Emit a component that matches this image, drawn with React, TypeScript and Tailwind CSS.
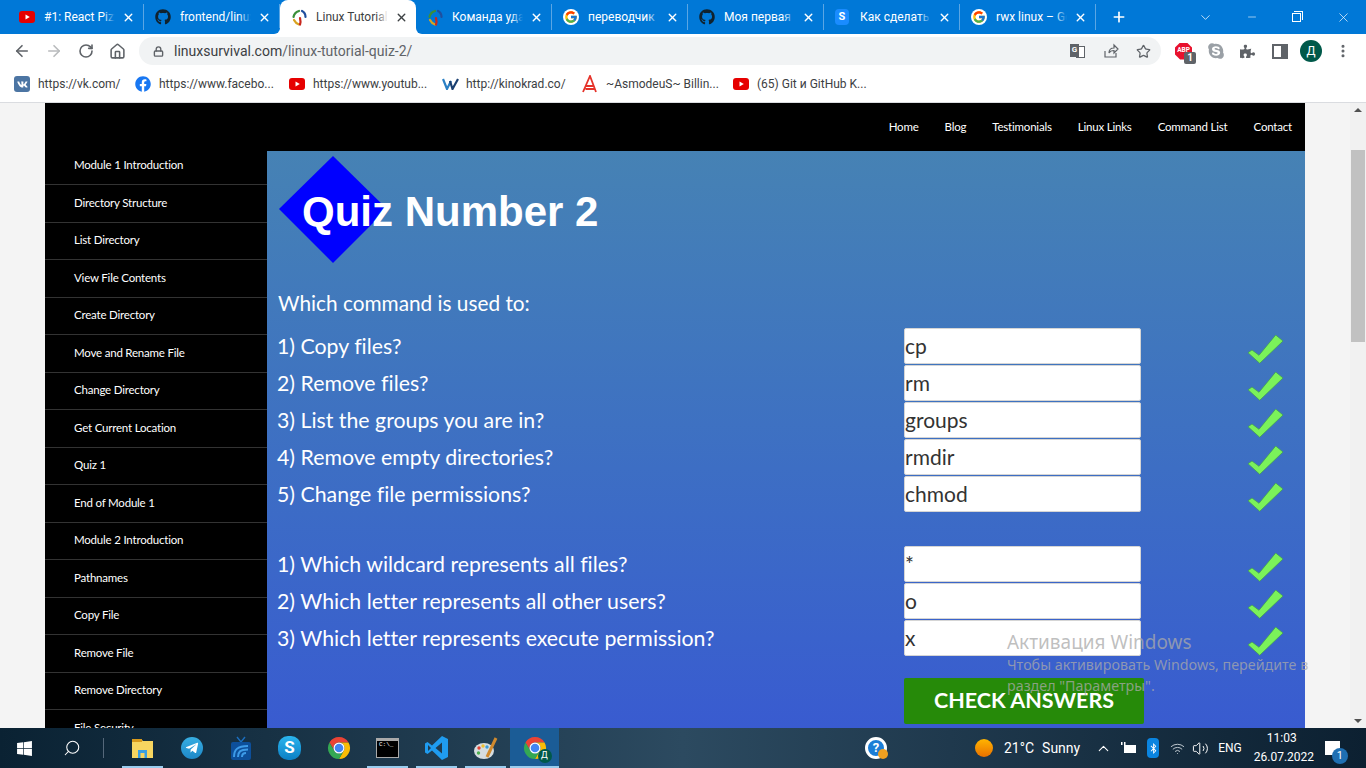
import type { ReactNode } from 'react';
import { ArrowLeft, ArrowRight, RotateCw, Home, Lock, Star, Plus, X, Minus, ChevronDown, ChevronUp, Search, Volume2, Wifi, MoreVertical } from 'lucide-react';
import { FaGithub, FaVk, FaFacebook, FaSkype, FaTelegramPlane, FaWindows, FaBluetoothB, FaPuzzlePiece } from 'react-icons/fa';
import { FcGoogle } from 'react-icons/fc';

const sans = "font-['Roboto','Liberation_Sans',sans-serif]";
const lato = "font-['Lato','Liberation_Sans',sans-serif]";

function Youtube({ size = 16 }: { size?: number }) {
  return (
    <svg width={size} height={size} viewBox="0 0 16 16">
      <rect x="0" y="2" width="16" height="12" rx="3" fill="#e60000" />
      <path d="M6.5 5.5 L10.8 8 L6.5 10.5 Z" fill="#fff" />
    </svg>
  );
}

function SurvivalLogo() {
  return (
    <svg width="17" height="17" viewBox="0 0 17 17" fill="none" strokeWidth="2.2" strokeLinecap="round">
      <path d="M8 2 C5 3 3 5 2.5 8" stroke="#3a8f3a" />
      <path d="M11 2 C13 3 14.5 5 14.5 8" stroke="#1f4f9e" />
      <path d="M3 11 C4 13 5 14.5 8 15.5" stroke="#d9a320" />
      <path d="M9 9 C9.5 11 10 13 9 15.5" stroke="#c8281e" />
    </svg>
  );
}

function Chrome({ size = 24 }: { size?: number }) {
  return (
    <svg width={size} height={size} viewBox="0 0 24 24">
      <path d="M2.47 6.5 A11 11 0 0 1 21.53 6.5 L12 6.5 A5.5 5.5 0 0 0 7.24 14.75 Z" fill="#ea4335" />
      <path d="M21.53 6.5 A11 11 0 0 1 12 23 L16.76 14.75 A5.5 5.5 0 0 0 12 6.5 Z" fill="#fbbc05" />
      <path d="M12 23 A11 11 0 0 1 2.47 6.5 L7.24 14.75 A5.5 5.5 0 0 0 16.76 14.75 Z" fill="#34a853" />
      <circle cx="12" cy="12" r="5.5" fill="#fff" />
      <circle cx="12" cy="12" r="4.3" fill="#4285f4" />
    </svg>
  );
}

function VsCode() {
  return (
    <svg width="24" height="26" viewBox="0 0 24 26">
      <path d="M17 1 L23 4 V22 L17 25 L7 15.5 L2.5 19 L0 17.5 V8.5 L2.5 7 L7 10.5 Z M17 7.5 L10.5 13 L17 18.5 Z M3 10 V16 L6 13 Z" fill="#1f9cf0" fillRule="evenodd" />
    </svg>
  );
}

function Check() {
  return (
    <svg width="36" height="29" viewBox="0 0 36 29">
      <polygon points="0,17.7 4,15 11,20.3 27.7,0 35,6 11.7,28.3" fill="#7bf25a" stroke="#3f9a52" strokeWidth="0.7" />
    </svg>
  );
}

function Tab({ icon, title, active }: { icon: ReactNode; title: string; active?: boolean }) {
  return (
    <div className={active ? 'relative flex h-[34px] w-[136px] items-center rounded-t-lg bg-white pl-[11px] pr-[8px] text-[#3c4043]' : 'flex h-[26px] w-[136px] items-center border-r border-[#5ba6e4] pl-[11px] pr-[8px] text-white'}>
      {active && (
        <>
          <div className="absolute -left-[6px] bottom-0 h-[6px] w-[6px] bg-white"><div className="h-full w-full rounded-br-[6px] bg-[#0078d7]" /></div>
          <div className="absolute -right-[6px] bottom-0 h-[6px] w-[6px] bg-white"><div className="h-full w-full rounded-bl-[6px] bg-[#0078d7]" /></div>
        </>
      )}
      <div className="flex w-[25px] shrink-0 items-center">{icon}</div>
      <div className="relative flex-1 overflow-hidden whitespace-nowrap text-[12px]">
        {title}
        <div className={active ? 'absolute right-0 top-0 h-full w-3 bg-gradient-to-r from-transparent to-white' : 'absolute right-0 top-0 h-full w-3 bg-gradient-to-r from-transparent to-[#0078d7]'} />
      </div>
      <X size={13} strokeWidth={2.6} className="ml-[7px] shrink-0" />
    </div>
  );
}

function Bookmark({ icon, label, width }: { icon: ReactNode; label: string; width: string }) {
  return (
    <div className={`flex items-center ${width}`}>
      <div className="flex w-[24px] shrink-0 items-center">{icon}</div>
      <span className="whitespace-nowrap text-[12px] text-[#3c4043]">{label}</span>
    </div>
  );
}

function BrowserBar() {
  return (
    <div className={`${sans} shrink-0`}>
      <div className="flex h-[34px] items-end bg-[#0078d7] pl-[8px]">
        <div className="mb-[4px] flex"><Tab icon={<Youtube />} title="#1: React Pizza" /><Tab icon={<FaGithub size={16} color="#10222e" />} title="frontend/linux" /></div>
        <Tab active icon={<SurvivalLogo />} title="Linux Tutorial" />
        <div className="mb-[4px] flex">
          <Tab icon={<SurvivalLogo />} title="Команда удал" />
          <Tab icon={<div className="rounded-full bg-white p-[1px]"><FcGoogle size={14} /></div>} title="переводчик" />
          <Tab icon={<FaGithub size={16} color="#10222e" />} title="Моя первая" />
          <Tab icon={<div className="flex h-[16px] w-[14px] items-center justify-center rounded-[4px] bg-[#1a8cff] text-[11px] font-bold">S</div>} title="Как сделать с" />
          <Tab icon={<div className="rounded-full bg-white p-[1px]"><FcGoogle size={14} /></div>} title="rwx linux – Go" />
        </div>
        <div className="flex h-[34px] flex-1 items-center text-white">
          <Plus size={16} strokeWidth={2.5} className="ml-[15px]" />
          <ChevronDown size={15} strokeWidth={1.2} className="ml-[71px]" />
          <Minus size={12} strokeWidth={1.2} className="ml-[33px]" />
          <div className="ml-[34px] flex h-[12px] w-[12px] items-center">
            <div className="relative h-[9px] w-[9px] border border-white">
              <div className="absolute -right-[3px] -top-[3px] h-[9px] w-[9px] border-r border-t border-white" />
            </div>
          </div>
          <X size={15} strokeWidth={1.1} className="ml-[32px]" />
        </div>
      </div>
      <div className="flex h-[34px] items-center bg-white text-[#5f6368]">
        <ArrowLeft size={18} strokeWidth={2.2} className="ml-[13px]" />
        <ArrowRight size={18} strokeWidth={2.2} className="ml-[14px] text-[#b9bbbd]" />
        <RotateCw size={16} strokeWidth={2.4} className="ml-[15px]" />
        <Home size={17} strokeWidth={2.2} className="ml-[15px]" />
        <div className="ml-[13px] flex h-[28px] w-[1022px] items-center rounded-full bg-[#f1f3f4] pl-[14px] pr-[10px]">
          <Lock size={11} strokeWidth={3} />
          <span className="ml-[10px] text-[14px] text-[#3c4043]">linuxsurvival.com<span className="text-[#5f6368]">/linux-tutorial-quiz-2/</span></span>
          <div className="relative ml-auto h-[15px] w-[15px]">
            <div className="absolute right-0 top-[2px] h-[12px] w-[9px] border border-[#5f6368] bg-white" />
            <div className="absolute left-0 top-0 flex h-[13px] w-[9px] items-center justify-center bg-[#5f6368] text-[8px] font-bold text-white">G</div>
          </div>
          <svg width="16" height="16" viewBox="0 0 16 16" fill="none" stroke="#5f6368" strokeWidth="1.2" className="ml-[18px]">
            <path d="M2 8 V14 H13 V10 M6 10 C6 6 9 5 11 5 V2 L15 6 L11 10 V7.5 C9 7.5 7 8 6 10 Z" />
          </svg>
          <Star size={15} strokeWidth={2} className="ml-[17px]" />
        </div>
        <div className="relative ml-[14px] flex h-[17px] w-[17px] items-center justify-center bg-[#e8112d] text-[6.5px] font-bold text-white [clip-path:polygon(30%_0,70%_0,100%_30%,100%_70%,70%_100%,30%_100%,0_70%,0_30%)]">
          ABP
        </div>
        <div className="relative -ml-[8px] mt-[13px] flex h-[12px] w-[12px] items-center justify-center rounded-[2px] bg-[#5f6368] text-[10px] font-bold text-white">1</div>
        <FaSkype size={18} className="ml-[11px] text-[#9aa0a6]" />
        <FaPuzzlePiece size={15} className="ml-[15px]" />
        <svg width="16" height="15" viewBox="0 0 16 15" className="ml-[17px]">
          <rect x="1" y="1" width="14" height="13" fill="none" stroke="#5f6368" strokeWidth="2" />
          <rect x="9" y="1" width="6" height="13" fill="#5f6368" />
        </svg>
        <div className="ml-[12px] flex h-[22px] w-[22px] items-center justify-center rounded-full bg-[#00594a] text-[12px] text-white">Д</div>
        <MoreVertical size={16} strokeWidth={2.6} className="ml-[13px]" />
      </div>
      <div className="flex h-[35px] items-center border-b border-[#dadce0] bg-white pb-[2px] pl-[14px]">
        <Bookmark width="w-[121px]" icon={<div className="flex h-[16px] w-[16px] items-center justify-center rounded-[3px] bg-[#4c75a3]"><FaVk size={11} color="#fff" /></div>} label="https://vk.com/" />
        <Bookmark width="w-[154px]" icon={<FaFacebook size={16} color="#1877f2" />} label="https://www.facebo..." />
        <Bookmark width="w-[153px]" icon={<Youtube />} label="https://www.youtub..." />
        <Bookmark
          width="w-[140px]"
          icon={
            <svg width="17" height="12" viewBox="0 0 17 12" fill="none" strokeWidth="2.2">
              <path d="M1 1 L5 11 L9 3" stroke="#2a7fc4" />
              <path d="M8 3 L10.5 11 L16 1" stroke="#1a3f70" />
            </svg>
          }
          label="http://kinokrad.co/"
        />
        <Bookmark
          width="w-[151px]"
          icon={
            <svg width="16" height="18" viewBox="0 0 16 18" fill="none" stroke="#e5332a" strokeWidth="1.8">
              <path d="M1 17 L8 1 L14 17 M4 11 H12 M3.5 14 H13" />
            </svg>
          }
          label="~AsmodeuS~ Billin..."
        />
        <Bookmark width="w-[140px]" icon={<Youtube />} label="(65) Git и GitHub K..." />
      </div>
    </div>
  );
}

const sideItems = ['Module 1 Introduction', 'Directory Structure', 'List Directory', 'View File Contents', 'Create Directory', 'Move and Rename File', 'Change Directory', 'Get Current Location', 'Quiz 1', 'End of Module 1', 'Module 2 Introduction', 'Pathnames', 'Copy File', 'Remove File', 'Remove Directory', 'File Security'];

function QuizRow({ label, value }: { label: string; value: string }) {
  return (
    <div className="mb-px flex h-[36px] items-center">
      <div className="w-[626px] -translate-x-px pt-[2px] text-[21.3px] leading-none text-white [font-variant-ligatures:none]">{label}</div>
      <input readOnly value={value} className="h-[36px] w-[237px] rounded-[2px] border border-[#d5d5d5] bg-white pb-[2px] text-[21px] text-[#333]" />
      <div className="ml-[107px] mt-[7px] self-start"><Check /></div>
    </div>
  );
}

function PageContent() {
  return (
    <div className={`${lato} flex min-w-0 flex-1 flex-col overflow-hidden bg-[#f4f4f4] px-[45px]`}>
      <div className="flex h-[48px] shrink-0 items-center justify-end gap-[26px] bg-black pr-[13px] text-[11.5px] tracking-[-0.2px] text-white">
        <span>Home</span><span>Blog</span><span>Testimonials</span><span>Linux Links</span><span>Command List</span><span>Contact</span>
      </div>
      <div className="flex min-h-0 flex-1">
        <div className="w-[222px] shrink-0 overflow-hidden bg-black">
          {sideItems.map((item) => (
            <div key={item} className="flex h-[37.5px] items-center border-b border-[#333] pb-[1.5px] pl-[29px] text-[11.5px] tracking-[-0.2px] text-white first:h-[34px] first:pb-[6px]">{item}</div>
          ))}
        </div>
        <div className="relative flex-1 bg-gradient-to-b from-[#4682b4] to-[#395bd0] pl-[11px]">
          <svg width="108" height="107" viewBox="0 0 108 107" className="absolute left-[12px] top-[5px]">
            <polygon points="54,0 108,53 54,107 0,53" fill="#0000ff" />
          </svg>
          <h1 className="relative ml-[24px] mt-[34px] font-['Liberation_Sans',sans-serif] text-[42px] font-bold leading-[54px] text-white">Quiz Number 2</h1>
          <p className="mt-[50px] h-[27px] text-[20.8px] leading-[27px] text-white">Which command is used to:</p>
          <div className="mt-[12px]">
            <QuizRow label="1) Copy files?" value="cp" />
            <QuizRow label="2) Remove files?" value="rm" />
            <QuizRow label="3) List the groups you are in?" value="groups" />
            <QuizRow label="4) Remove empty directories?" value="rmdir" />
            <QuizRow label="5) Change file permissions?" value="chmod" />
          </div>
          <div className="mt-[34px]">
            <QuizRow label="1) Which wildcard represents all files?" value="*" />
            <QuizRow label="2) Which letter represents all other users?" value="o" />
            <QuizRow label="3) Which letter represents execute permission?" value="x" />
          </div>
          <button className="ml-[626px] mt-[21px] h-[46px] w-[240px] rounded-[2px] bg-[#268a09] pb-[2px] text-[21.5px] font-bold text-white">CHECK ANSWERS</button>
        </div>
      </div>
    </div>
  );
}

function Scrollbar() {
  return (
    <div className="flex w-[16px] shrink-0 flex-col items-center bg-[#f1f1f1]">
      <div className="mt-[5px] h-0 w-0 border-x-4 border-b-4 border-x-transparent border-b-[#505050]" />
      <div className="mt-[38px] h-[192px] w-[14px] bg-[#c1c1c1]" />
      <div className="mt-auto mb-[5px] h-0 w-0 border-x-4 border-t-4 border-x-transparent border-t-[#505050]" />
    </div>
  );
}

function TaskSlot({ children, open, active }: { children: ReactNode; open?: boolean; active?: boolean }) {
  return (
    <div className={active ? 'relative flex h-[40px] w-[49px] items-center justify-center bg-[#1b5c96]' : 'relative flex h-[40px] w-[49px] items-center justify-center'}>
      {children}
      {active && <div className="absolute inset-x-0 bottom-0 h-[2px] bg-[#99ccee]" />}
      {open && <div className="absolute inset-x-[4px] bottom-0 h-[2px] bg-[#99ccee]" />}
    </div>
  );
}

function Taskbar() {
  return (
    <div className={`${sans} flex h-[40px] shrink-0 items-center bg-gradient-to-r from-[#0a2233] via-[#2c4a60] to-[#0c2031] text-white`}>
      <div className="flex w-[48px] justify-center"><FaWindows size={17} /></div>
      <div className="flex w-[48px] justify-center"><Search size={18} strokeWidth={1.4} className="-scale-x-100" /></div>
      <div className="ml-[7px] h-[20px] w-px bg-[#55687a]" />
      <div className="ml-[14px] flex">
        <TaskSlot open>
          <svg width="23" height="21" viewBox="0 0 23 21">
            <path d="M1 1 H10 L12 3 H22 V20 H1 Z" fill="#f7d560" />
            <rect x="1" y="1" width="10" height="3" fill="#d99a1c" />
            <path d="M7 12 H16 V20 H13.5 V15 H9.5 V20 H7 Z" fill="#3a9fe2" />
          </svg>
        </TaskSlot>
        <TaskSlot>
          <div className="flex h-[22px] w-[22px] items-center justify-center rounded-full bg-gradient-to-b from-[#37aee2] to-[#1e88c8]"><FaTelegramPlane size={14} /></div>
        </TaskSlot>
        <TaskSlot>
          <svg width="22" height="25" viewBox="0 0 22 25" fill="none">
            <path d="M7 1 L11 6 L15 1" stroke="#1b6fc0" strokeWidth="1.4" />
            <rect x="1" y="6" width="20" height="18" rx="2" fill="#0d4f9a" />
            <path d="M4 21 C4 14 7 10 18 10 M8 21 C8 16 10 13.5 18 13.5 M12 21 C12 18 13 17 16 17" stroke="#3d9be8" strokeWidth="2" />
          </svg>
        </TaskSlot>
        <TaskSlot>
          <div className="flex h-[24px] w-[23px] items-center justify-center rounded-[10px] bg-gradient-to-b from-[#2bb5ee] to-[#0a7fc4] text-[17px] font-bold">S</div>
        </TaskSlot>
        <TaskSlot><Chrome /></TaskSlot>
        <TaskSlot open>
          <div className="h-[20px] w-[23px] border border-t-[3px] border-[#aaa] bg-black pl-[2px] pt-[1px] font-mono text-[6px] leading-none">C:\_</div>
        </TaskSlot>
        <TaskSlot open><VsCode /></TaskSlot>
        <TaskSlot open>
          <svg width="26" height="26" viewBox="0 0 26 26">
            <ellipse cx="11" cy="16" rx="10" ry="8" fill="#d6dde0" />
            <circle cx="6" cy="13" r="1.7" fill="#e34234" />
            <circle cx="10" cy="11" r="1.7" fill="#f0c030" />
            <circle cx="5.5" cy="18" r="1.7" fill="#4caf50" />
            <circle cx="14" cy="12" r="1.7" fill="#3a9ad9" />
            <path d="M14 22 L23 3" stroke="#d08a2e" strokeWidth="3" />
          </svg>
        </TaskSlot>
        <TaskSlot active>
          <div className="relative">
            <Chrome />
            <div className="absolute -bottom-[3px] -right-[5px] flex h-[14px] w-[14px] items-center justify-center rounded-full bg-[#00594a] text-[9px]">Д</div>
          </div>
        </TaskSlot>
      </div>
      <div className="relative ml-[306px] flex h-[22px] w-[22px] items-center justify-center rounded-full border-[3px] border-white bg-[#1c7ed6] text-[13px] font-bold">
        ?
        <div className="absolute -bottom-[3px] -right-[4px] h-[10px] w-[10px] rounded-full bg-[#f0a020]" />
      </div>
      <div className="ml-[88px] h-[18px] w-[18px] rounded-full bg-gradient-to-b from-[#ffb400] to-[#e87000]" />
      <span className="ml-[11px] text-[14px]">21°C</span>
      <span className="ml-[8px] text-[14px]">Sunny</span>
      <ChevronUp size={17} strokeWidth={1.5} className="ml-[15px]" />
      <svg width="16" height="12" viewBox="0 0 16 12" fill="#fff" className="ml-[9px]">
        <rect x="3" y="3" width="12" height="8" />
        <rect x="0" y="0" width="1.5" height="3" />
        <rect x="3" y="0" width="1.5" height="3" />
      </svg>
      <div className="ml-[10px] flex h-[20px] w-[12px] items-center justify-center rounded-[4px] bg-[#0a84e0]"><FaBluetoothB size={11} /></div>
      <Wifi size={15} strokeWidth={1.5} className="ml-[11px] text-[#c8d0d6]" />
      <Volume2 size={17} strokeWidth={1.4} className="ml-[7px]" />
      <span className="ml-[9px] text-[12px]">ENG</span>
      <div className="ml-[12px] w-[56px] pb-[1px] text-center text-[12px] leading-[19px]">
        <div>11:03</div>
        <div>26.07.2022</div>
      </div>
      <div className="relative ml-[15px] h-[14px] w-[15px] bg-white">
        <div className="absolute -bottom-[9px] left-[7px] flex h-[16px] w-[16px] items-center justify-center rounded-full bg-[#1f6fb2] text-[11px]">1</div>
      </div>
    </div>
  );
}

export default function App() {
  return (
    <div className="relative flex h-screen w-full flex-col overflow-hidden">
      <BrowserBar />
      <div className="flex min-h-0 flex-1">
        <PageContent />
        <Scrollbar />
      </div>
      <Taskbar />
      {/* windows watermark sits over everything */}
      <div className="pointer-events-none absolute left-[1007px] top-[631px] font-['Noto_Sans',sans-serif] text-[rgba(170,170,170,0.75)]">
        <div className="text-[19px] leading-[23px]">Активация Windows</div>
        <div className="w-[320px] text-[14.3px] leading-[21px]">Чтобы активировать Windows, перейдите в раздел "Параметры".</div>
      </div>
    </div>
  );
}
